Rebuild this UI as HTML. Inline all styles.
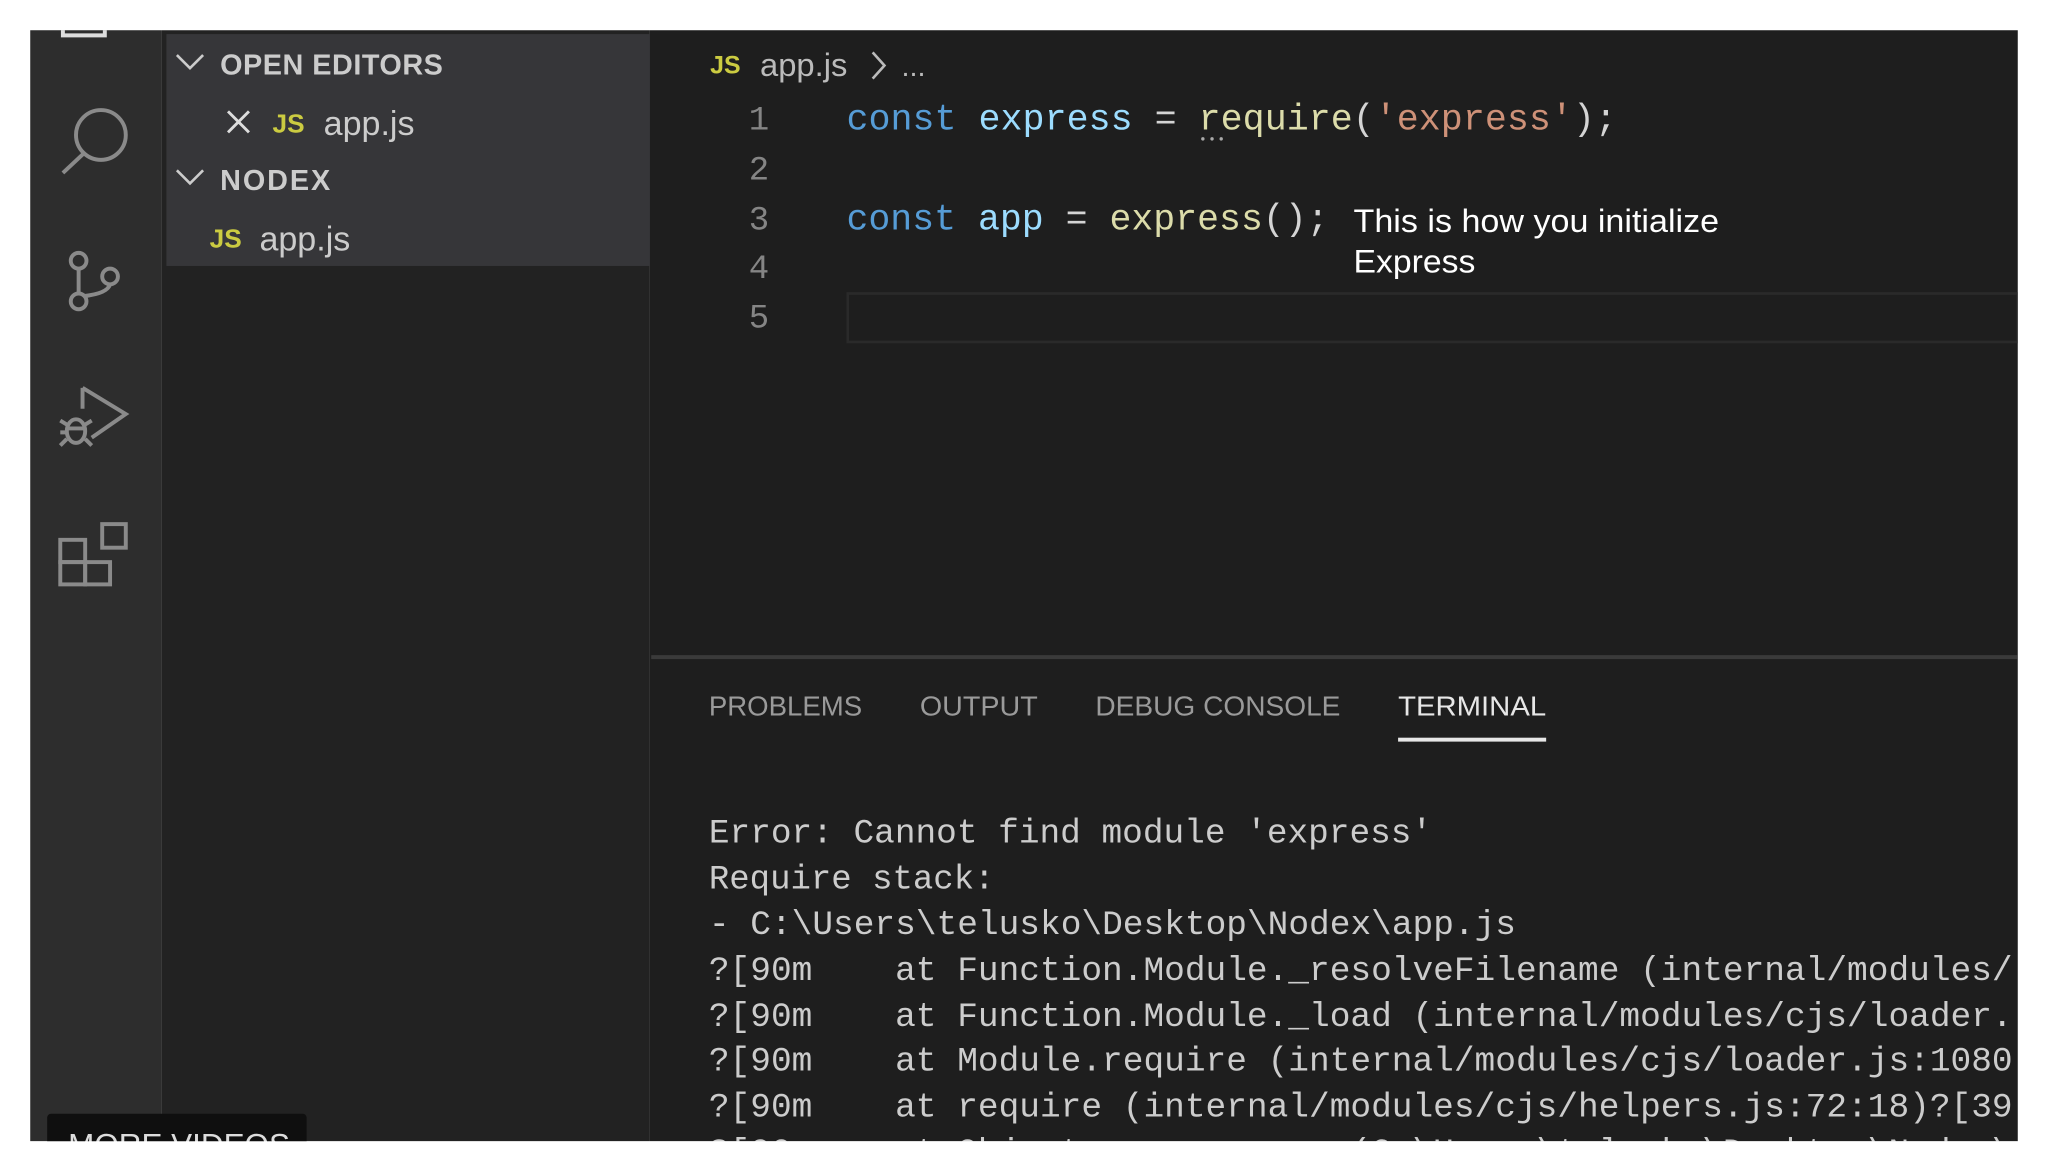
<!DOCTYPE html>
<html><head><meta charset="utf-8"><style>
html,body{margin:0;padding:0;background:#fff;width:2048px;height:1152px;overflow:hidden}
svg{display:block}
.m{font-family:"Liberation Mono",monospace}
.s{font-family:"Liberation Sans",sans-serif}
</style></head><body>
<svg width="2048" height="1152" viewBox="0 0 1563 879.2" preserveAspectRatio="none" xmlns="http://www.w3.org/2000/svg">
<rect width="1563" height="880" fill="#fff"/>
<rect x="23" y="23" width="100" height="848" fill="#2d2d2d"/>
<rect x="123" y="23" width="373" height="848" fill="#222222"/>
<rect x="127" y="26" width="369" height="177" fill="#363639"/>
<rect x="496" y="23" width="1044" height="848" fill="#1e1e1e"/>
<rect x="497" y="500" width="1043" height="3" fill="#3a3a3a"/>
<rect x="647" y="224" width="893" height="37" fill="none" stroke="#2a2a2a" stroke-width="2"/>
<path d="M48 23 V27 H80 V23" fill="none" stroke="#ddd" stroke-width="3"/>
<g fill="none" stroke="#8a8a8a" stroke-width="3">
<circle cx="77" cy="103" r="19"/>
<line x1="64" y1="117" x2="48" y2="132"/>
<circle cx="60" cy="199" r="6"/>
<circle cx="84" cy="211" r="6"/>
<circle cx="60" cy="230" r="6"/>
<line x1="60" y1="205" x2="60" y2="224"/>
<path d="M84 217 Q82 224 64 226"/>
<path d="M63 296 L96 316 L70 334 M63 296 V312"/>
<ellipse cx="58" cy="329" rx="7" ry="9"/>
<path d="M46 321 L51 324 M46 340 L51 335 M70 321 L65 324 M70 340 L65 335 M46 330 H51 M52 327 H64"/>
<rect x="46" y="412" width="19" height="17"/>
<rect x="46" y="429" width="19" height="17"/>
<rect x="65" y="429" width="19" height="17"/>
<rect x="78" y="400" width="18" height="18"/>
</g>
<g class="s">
<path d="M135 42 L145 52 L155 42" fill="none" stroke="#ccc" stroke-width="2"/>
<text x="168" y="57" fill="#cccccc" font-size="22" font-weight="bold" textLength="170">OPEN EDITORS</text>
<path d="M174 85 L190 101 M190 85 L174 101" stroke="#ddd" stroke-width="2.2"/>
<text x="208" y="101" fill="#cbcb41" font-size="20" font-weight="bold">JS</text>
<text x="247" y="103" fill="#cccccc" font-size="26">app.js</text>
<path d="M135 130 L145 140 L155 130" fill="none" stroke="#ccc" stroke-width="2"/>
<text x="168" y="145" fill="#cccccc" font-size="22" font-weight="bold" textLength="84">NODEX</text>
<text x="160" y="189" fill="#cbcb41" font-size="20" font-weight="bold">JS</text>
<text x="198" y="191" fill="#cccccc" font-size="26">app.js</text>
<text x="542" y="56" fill="#cbcb41" font-size="19" font-weight="bold">JS</text>
<text x="580" y="58" fill="#bbbbbb" font-size="25">app.js</text>
<path d="M666 40 L675 50 L666 60" fill="none" stroke="#bbb" stroke-width="2"/>
<text x="688" y="58" fill="#bbbbbb" font-size="22">...</text>
</g>
<g class="m" fill="#858585" font-size="26" text-anchor="end">
<text x="587" y="99">1</text><text x="587" y="137">2</text><text x="587" y="175">3</text><text x="587" y="212">4</text><text x="587" y="250">5</text>
</g>
<g class="m" font-size="28">
<text x="646" y="99" textLength="588" lengthAdjust="spacingAndGlyphs"><tspan fill="#569cd6">const</tspan><tspan fill="#9cdcfe"> express</tspan><tspan fill="#d4d4d4"> = </tspan><tspan fill="#dcdcaa">require</tspan><tspan fill="#d4d4d4">(</tspan><tspan fill="#ce9178">'express'</tspan><tspan fill="#d4d4d4">);</tspan></text>
<text x="646" y="175" textLength="368" lengthAdjust="spacingAndGlyphs"><tspan fill="#569cd6">const</tspan><tspan fill="#9cdcfe"> app</tspan><tspan fill="#d4d4d4"> = </tspan><tspan fill="#dcdcaa">express</tspan><tspan fill="#d4d4d4">();</tspan></text>
</g>
<g fill="#aaa"><circle cx="918" cy="106" r="1.3"/><circle cx="925" cy="106" r="1.3"/><circle cx="932" cy="106" r="1.3"/></g>
<g class="s" fill="#ffffff" font-size="24.5">
<text x="1033" y="177" textLength="279" lengthAdjust="spacingAndGlyphs">This is how you initialize</text>
<text x="1033" y="208" textLength="93" lengthAdjust="spacingAndGlyphs">Express</text>
</g>
<g class="s" font-size="21">
<text x="541" y="546" fill="#9a9a9a" textLength="117" lengthAdjust="spacingAndGlyphs">PROBLEMS</text>
<text x="702" y="546" fill="#9a9a9a" textLength="90" lengthAdjust="spacingAndGlyphs">OUTPUT</text>
<text x="836" y="546" fill="#9a9a9a" textLength="187" lengthAdjust="spacingAndGlyphs">DEBUG CONSOLE</text>
<text x="1067" y="546" fill="#e7e7e7" textLength="113" lengthAdjust="spacingAndGlyphs">TERMINAL</text>
</g>
<rect x="1067" y="563" width="113" height="3" fill="#e7e7e7"/>
<g class="m" fill="#cccccc" font-size="26">
<text x="541" y="643" textLength="552" lengthAdjust="spacingAndGlyphs">Error: Cannot find module 'express'</text>
<text x="541" y="678" textLength="218" lengthAdjust="spacingAndGlyphs">Require stack:</text>
<text x="541" y="713" textLength="616" lengthAdjust="spacingAndGlyphs">- C:\Users\telusko\Desktop\Nodex\app.js</text>
<text x="541" y="748" xml:space="preserve" textLength="995" lengthAdjust="spacingAndGlyphs">?[90m    at Function.Module._resolveFilename (internal/modules/</text>
<text x="541" y="783" xml:space="preserve" textLength="995" lengthAdjust="spacingAndGlyphs">?[90m    at Function.Module._load (internal/modules/cjs/loader.</text>
<text x="541" y="817" xml:space="preserve" textLength="995" lengthAdjust="spacingAndGlyphs">?[90m    at Module.require (internal/modules/cjs/loader.js:1080</text>
<text x="541" y="852" xml:space="preserve" textLength="995" lengthAdjust="spacingAndGlyphs">?[90m    at require (internal/modules/cjs/helpers.js:72:18)?[39</text>
<text x="541" y="887" xml:space="preserve" textLength="995" lengthAdjust="spacingAndGlyphs">?[90m    at Object.&lt;anonymous&gt; (C:\Users\telusko\Desktop\Nodex\</text>
</g>
<rect x="36" y="850" width="198" height="30" rx="3" fill="#0f0f0f"/>
<text x="52" y="882" class="s" fill="#ddd" font-size="24">MORE VIDEOS</text>
<rect x="0" y="0" width="1563" height="23" fill="#fff"/>
<rect x="0" y="0" width="23" height="880" fill="#fff"/>
<rect x="1540" y="0" width="23" height="880" fill="#fff"/>
<rect x="0" y="871" width="1563" height="9" fill="#fff"/>
</svg>
</body></html>
